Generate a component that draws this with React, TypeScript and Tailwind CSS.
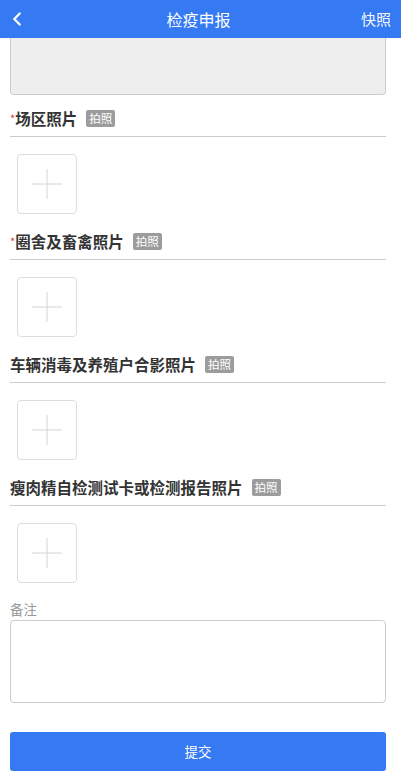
import { ChevronLeft } from "lucide-react";

const sections = [
  { title: "场区照片", required: true },
  { title: "圈舍及畜禽照片", required: true },
  { title: "车辆消毒及养殖户合影照片", required: false },
  { title: "瘦肉精自检测试卡或检测报告照片", required: false },
];

function UploadBox() {
  return (
    <div className="ml-[7px] w-[60px] h-[60px] rounded-[4px] border border-[#dddddd] flex items-center justify-center bg-white">
      <svg width="30" height="30" viewBox="0 0 30 30">
        <path d="M15 0V30M0 15H30" stroke="#d4d4d4" strokeWidth="1" />
      </svg>
    </div>
  );
}

export default function App() {
  return (
    <div
      className="w-[401px] h-[782px] bg-white overflow-hidden"
      style={{ fontFamily: '"Noto Sans CJK SC", "Noto Sans", sans-serif' }}
    >
      {/* Header */}
      <div className="h-[38px] bg-[#3579f3] flex items-center relative">
        <ChevronLeft size={22} strokeWidth={2.5} className="text-white ml-[6px]" />
        <div className="absolute left-0 right-0 text-center text-white text-[16px] leading-[38px] pointer-events-none -translate-x-[2px]">
          检疫申报
        </div>
        <div className="ml-auto mr-[10px] text-white text-[15px] opacity-95">快照</div>
      </div>

      <div className="pl-[10px] pr-[15px]">
        {/* previous field, scrolled under header */}
        <div className="h-[57px] bg-[#eeeeee] border border-t-0 border-[#cccccc] rounded-b-[4px]" />

        {sections.map((s, i) => (
          <div key={s.title} className={i === 0 ? "pt-[13px]" : "pt-[17px]"}>
            <div className="h-5 flex items-center">
              <span className="text-[15.5px] leading-5 font-semibold text-[#333333]">
                {s.required && <span className="text-[#e5343a] text-[11px] align-top font-normal">*</span>}
                {s.title}
              </span>
              <span className="ml-[9px] h-[17px] px-[3px] rounded-[2px] bg-[#9c9c9c] text-white text-[11.5px] leading-[17px]">
                拍照
              </span>
            </div>
            <div className="mt-2 border-t border-[#cccccc]" />
            <div className="mt-[17px]">
              <UploadBox />
            </div>
          </div>
        ))}

        <div className="pt-[17px] text-[13.5px] leading-[18px] text-[#999999]">备注</div>
        <textarea className="mt-[2px] block w-full h-[83px] rounded-[4px] border border-[#cccccc] resize-none outline-none" />

        <button className="mt-[29px] w-full h-[39px] rounded-[3px] bg-[#3579f3] text-white text-[13.5px]">
          提交
        </button>
      </div>
    </div>
  );
}
